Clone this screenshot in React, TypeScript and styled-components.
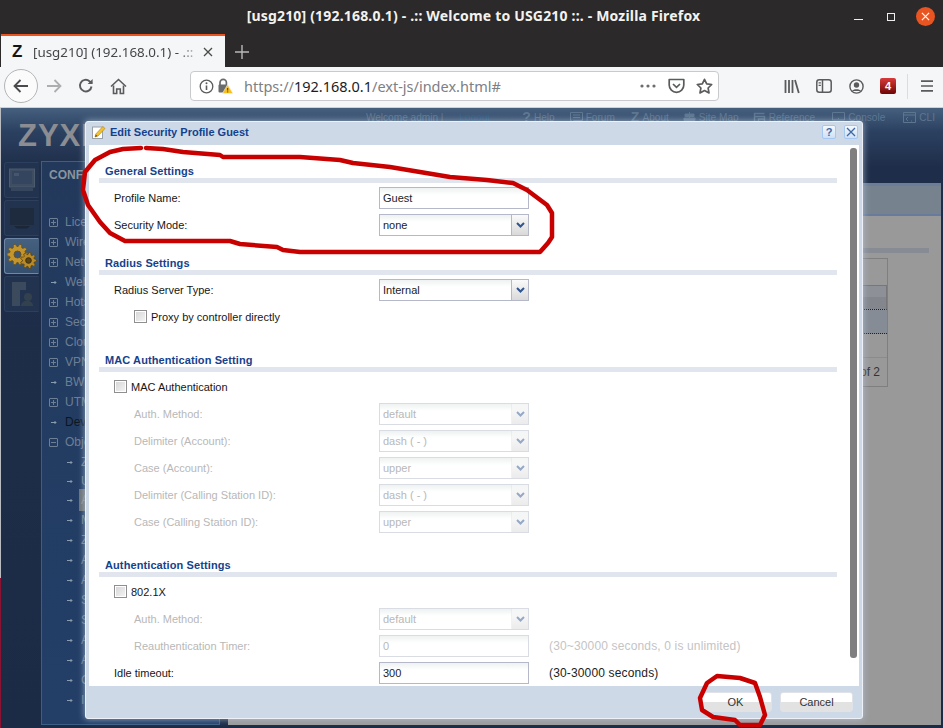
import React from "react";
import styled, { createGlobalStyle } from "styled-components";

const Global = createGlobalStyle`
  html, body { margin: 0; padding: 0; background: #1c2b45; }
  #root { width: 943px; height: 728px; overflow: hidden; }
  * { box-sizing: border-box; }
`;

const Screen = styled.div`
  position: relative;
  width: 943px;
  height: 728px;
  overflow: hidden;
  font-family: "Liberation Sans", Arial, sans-serif;
`;

/* ---------- window title ---------- */
const TitleBar = styled.div`
  position: relative;
  height: 34px;
  background: #2b292a;
  display: flex;
  align-items: center;
  justify-content: center;
  padding: 0 0 3px 4px;
  color: #f4f2ef;
  font: 700 14px "Noto Sans", sans-serif;
  letter-spacing: 0.18px;
`;
const WindowControls = styled.div`
  position: absolute;
  right: 8px;
  top: 7px;
  display: flex;
  align-items: center;
  gap: 16px;
`;
const MinBtn = styled.span`
  width: 9px;
  height: 1px;
  margin-top: 6px;
  margin-right: 8px;
  background: #eee;
`;
const MaxBtn = styled.span`
  width: 8px;
  height: 8px;
  margin-right: 5px;
  border: 1px solid #eee;
`;
const CloseBtn = styled.span`
  width: 19px;
  height: 19px;
  border-radius: 50%;
  background: #e95420;
  display: flex;
  align-items: center;
  justify-content: center;
`;

/* ---------- tabs ---------- */
const TabStrip = styled.div`
  height: 33px;
  background: #2b292a;
  display: flex;
  padding-left: 1px;
`;
const Tab = styled.div`
  width: 224px;
  height: 33px;
  background: #f5f6f7;
  border-top: 2px solid #e95420;
  display: flex;
  align-items: center;
  padding: 0 12px 0 11px;
  color: #44464a;
  font: 400 13.4px "Noto Sans", sans-serif;
  white-space: nowrap;
`;
const TabLogo = styled.span`
  width: 21px;
  font: 700 17px "Liberation Sans", sans-serif;
  color: #141414;
`;
const TabText = styled.span`
  flex: 1;
  overflow: hidden;
  -webkit-mask-image: linear-gradient(90deg, #000 85%, transparent);
  mask-image: linear-gradient(90deg, #000 85%, transparent);
`;
const NewTab = styled.div`
  width: 34px;
  display: flex;
  align-items: center;
  justify-content: center;
  padding-top: 2px;
`;

/* ---------- nav bar ---------- */
const NavBar = styled.div`
  height: 41px;
  background: #f5f6f7;
  border-bottom: 1px solid #cfd0d1;
  display: flex;
  align-items: center;
  padding: 0 0 2px 4px;
`;
const BackCircle = styled.div`
  width: 34px;
  height: 34px;
  border-radius: 50%;
  background: #fbfbfc;
  border: 1px solid #b4b5b6;
  display: flex;
  align-items: center;
  justify-content: center;
`;
const NavIcon = styled.div<{ $w?: number }>`
  width: ${(p) => p.$w ?? 32}px;
  height: 24px;
  display: flex;
  align-items: center;
  justify-content: center;
`;
const UrlBar = styled.div`
  width: 529px;
  height: 30px;
  margin: 0 60px 0 56px;
  background: #fff;
  border: 1px solid #c9cacb;
  border-radius: 4px;
  display: flex;
  align-items: center;
  padding: 0 0 0 8px;
`;
const UrlText = styled.div`
  flex: 1;
  margin-left: 8px;
  font: 400 14.5px "Noto Sans", sans-serif;
  color: #7d8084;
  white-space: nowrap;
`;
const UrlHost = styled.span`
  color: #1c1c1e;
`;
const Badge = styled.div`
  width: 16px;
  height: 16px;
  border-radius: 2px;
  background: linear-gradient(#d83a3a, #6d0505);
  color: #fff;
  font: 700 11px "Liberation Sans", sans-serif;
  display: flex;
  align-items: center;
  justify-content: center;
`;
const NavSep = styled.div`
  width: 1px;
  height: 25px;
  margin: 0 3px 0 0;
  background: #dcdddf;
`;

/* ---------- page behind dialog ---------- */
const Page = styled.div`
  height: 620px;
  display: flex;
  flex-direction: column;
  background: linear-gradient(#455f7e 0, #2b4060 24px, #1e2d49 60px, #1c2b45 100%);
`;
const TopBand = styled.div`
  height: 53px;
  display: flex;
  align-items: flex-start;
  padding: 3px 8px 0 18px;
`;
const Logo = styled.div`
  margin-top: 7px;
  color: #8b8d92;
  font: 700 31px "Liberation Sans", sans-serif;
  letter-spacing: 1px;
`;
const TopLinks = styled.div`
  margin-left: auto;
  display: flex;
  align-items: center;
  color: #5d7690;
  font-size: 10.1px;
  height: 12px;
`;
const TopLink = styled.span<{ $ml: number }>`
  display: flex;
  align-items: center;
  gap: 3px;
  margin-left: ${(p) => p.$ml}px;
  white-space: nowrap;
`;
const LogoutLink = styled.span`
  margin-left: 13px;
  color: #2f5f86;
`;
const LinkGlyph = styled.b`
  font-size: 14px;
  line-height: 12px;
`;
const Body = styled.div`
  flex: 1;
  display: flex;
  min-height: 0;
`;
const EdgeStrip = styled.div`
  width: 1px;
  margin-top: -53px;
  background: linear-gradient(#b9bcc0 0, #b9bcc0 470px, #8c1234 470px);
`;
const IconRail = styled.div`
  width: 40px;
  padding: 1px 0 0 3px;
  display: flex;
  flex-direction: column;
  gap: 2px;
`;
const RailTile = styled.div<{ $active?: boolean }>`
  width: 35px;
  height: 36px;
  border-radius: 3px 0 0 3px;
  border: 1px solid ${(p) => (p.$active ? "#6f88a8" : "#2c3f5c")};
  border-right-color: transparent;
  background: ${(p) => (p.$active ? "linear-gradient(#46617f,#35506f)" : "#223350")};
  display: flex;
  align-items: center;
  justify-content: center;
`;
const Panel = styled.div`
  width: 179px;
  margin-bottom: 3px;
  border: 1px solid #3e5f85;
  background: linear-gradient(#22395c, #233f68);
  padding: 6px 0 0 7px;
  color: #6d7f95;
  font-size: 12px;
`;
const PanelTitle = styled.div`
  height: 44px;
  font-weight: 700;
  color: #8a949f;
`;
const MenuRow = styled.div<{ $child?: boolean; $dark?: boolean; $h?: number }>`
  height: ${(p) => p.$h ?? 20}px;
  display: flex;
  align-items: center;
  gap: 7px;
  margin-left: ${(p) => (p.$child ? 16 : 0)}px;
  color: ${(p) => (p.$dark ? "#0d1522" : "#6d7f95")};
  white-space: nowrap;
`;
const PlusBox = styled.span`
  width: 9px;
  height: 9px;
  flex: none;
  border: 1px solid #6d7f95;
  border-radius: 1px;
  position: relative;
  &::before {
    content: "";
    position: absolute;
    left: 1px;
    right: 1px;
    top: 3px;
    height: 1px;
    background: #6d7f95;
  }
`;
const PlusV = styled(PlusBox)`
  &::after {
    content: "";
    position: absolute;
    top: 1px;
    bottom: 1px;
    left: 3px;
    width: 1px;
    background: #6d7f95;
  }
`;
const LeafMark = styled.span`
  width: 9px;
  flex: none;
  display: flex;
  justify-content: center;
`;
const MenuHighlight = styled.span`
  background: #6d7277;
  color: #8a8f95;
  padding: 4px 12px 4px 2px;
  margin-left: -2px;
`;
const Main = styled.div`
  width: 713px;
  margin: 22px 0 3px 8px;
  background: #999;
  display: flex;
  flex-direction: column;
`;
const MainTabs = styled.div`
  height: 33px;
  background: #76838f;
  border-top: 3px solid #6c7d99;
  border-bottom: 2px solid #6a7a9c;
`;
const MainRule = styled.div`
  height: 5px;
  margin: 32px 12px 0 0;
  background: #878b94;
`;
const Table = styled.div`
  width: 660px;
  height: 129px;
  margin-top: 5px;
  border: 1px solid #7f7f7f;
  display: flex;
  flex-direction: column;
`;
const HeadRow = styled.div`
  height: 26px;
`;
const SelectedRow = styled.div`
  height: 25px;
  background: linear-gradient(#8d9096 50%, #83868d 50%);
  border: 1px solid #777;
  border-bottom: 1px dotted #222;
`;
const StripedRow = styled.div`
  height: 24px;
  background: #868c96;
  border-bottom: 1px dotted #222;
`;
const EmptyRow = styled.div`
  height: 24px;
  border-bottom: 1px solid #8b8b8b;
`;
const Pager = styled.div`
  flex: 1;
  display: flex;
  align-items: center;
  justify-content: flex-end;
  padding-right: 7px;
  font-size: 12px;
  color: #333;
`;

/* ---------- dialog ---------- */
const Dialog = styled.div`
  position: absolute;
  left: 85px;
  top: 121px;
  width: 778px;
  height: 598px;
  background: #cdd9e6;
  border: 1px solid #eef2f8;
  border-radius: 3px;
  box-shadow: 0 0 7px rgba(190, 205, 225, 0.75);
  display: flex;
  flex-direction: column;
`;
const DialogHead = styled.div`
  height: 23px;
  display: flex;
  align-items: center;
  padding: 0 4px 3px 6px;
  gap: 4px;
`;
const DialogTitle = styled.div`
  flex: 1;
  color: #14418f;
  font-size: 11px;
  font-weight: 700;
`;
const Tool = styled.div`
  width: 14px;
  height: 14px;
  margin-left: 4px;
  border: 1px solid #a6c8f0;
  border-radius: 2px;
  background: linear-gradient(#f4f8fd, #cfe0f4);
  display: flex;
  align-items: center;
  justify-content: center;
  color: #3d68a5;
  font-size: 11px;
  font-weight: 700;
`;
const DialogBody = styled.div`
  position: relative;
  height: 541px;
  margin: 0 3px;
  background: #fff;
  overflow: hidden;
  padding-top: 19px;
  font-size: 11px;
  color: #161616;
`;
const ScrollThumb = styled.div`
  position: absolute;
  right: 2px;
  top: 3px;
  width: 7px;
  height: 510px;
  border-radius: 3px;
  background: #7f7f7f;
`;
const Section = styled.section<{ $gap: number }>`
  margin-bottom: ${(p) => p.$gap}px;
`;
const SectionTitle = styled.div`
  height: 14px;
  line-height: 14px;
  padding-left: 16px;
  color: #15428b;
  font-weight: 700;
  font-size: 11px;
  letter-spacing: 0.1px;
`;
const SectionRule = styled.div`
  width: 738px;
  height: 5px;
  margin: 0 0 1px 10px;
  background: #e0e5ee;
`;
const Row = styled.div<{ $indent?: number }>`
  height: 27px;
  display: flex;
  align-items: center;
  padding-left: ${(p) => 25 + (p.$indent ?? 0)}px;
`;
const Label = styled.div<{ $indent?: number; $off?: boolean }>`
  width: ${(p) => 265 - (p.$indent ?? 0)}px;
  color: ${(p) => (p.$off ? "#b8b8b8" : "#161616")};
`;
const Check = styled.span`
  width: 13px;
  height: 13px;
  margin-right: 4px;
  border: 1px solid #8f8f8f;
  box-shadow: inset 0 0 0 1px #fff;
  background: linear-gradient(135deg, #d4d4d4, #f6f6f6);
`;
const Field = styled.div<{ $off?: boolean }>`
  width: 150px;
  height: 22px;
  display: flex;
  align-items: center;
  padding-left: 3px;
  border: 1px solid ${(p) => (p.$off ? "#dadce4" : "#b5b8c8")};
  background: linear-gradient(#eef2f1, #fff 7px);
  color: ${(p) => (p.$off ? "#b8b8b8" : "#222")};
`;
const SelectField = styled(Field)`
  position: relative;
  padding-right: 17px;
`;
const SelectText = styled.span`
  flex: 1;
`;
const SelectArrow = styled.span<{ $off?: boolean }>`
  position: absolute;
  right: 0;
  top: 0;
  bottom: 0;
  width: 17px;
  border-left: 1px solid ${(p) => (p.$off ? "#e2e4ea" : "#b5b8c8")};
  background: linear-gradient(#fafafa, #d9d9d9);
  opacity: ${(p) => (p.$off ? 0.5 : 1)};
  display: flex;
  align-items: center;
  justify-content: center;
`;
const Hint = styled.span<{ $off?: boolean }>`
  margin-left: 20px;
  font-size: 12px;
  color: ${(p) => (p.$off ? "#c4c4c4" : "#222")};
  letter-spacing: 0.15px;
`;
const DialogFoot = styled.div`
  flex: 1;
  display: flex;
  justify-content: flex-end;
  align-items: flex-start;
  gap: 8px;
  padding: 6px 9px 0 0;
`;
const Button = styled.div`
  width: 73px;
  height: 20px;
  border: 1px solid #dfe3e9;
  border-radius: 3px;
  background: linear-gradient(#fff 50%, #e2e2e2 50%);
  color: #333;
  font-size: 11px;
  display: flex;
  align-items: center;
  justify-content: center;
`;
const Ink = styled.svg`
  position: absolute;
  left: 0;
  top: 0;
  pointer-events: none;
`;

/* ---------- icons ---------- */
const g = "#5a5b5c";
const Back = () => (
  <svg width="18" height="18" viewBox="0 0 18 18" fill="none" stroke="#4a4b4c" strokeWidth="1.8">
    <path d="M16 9H2.500M8.500 3 2.500 9l6 6" />
  </svg>
);
const Forward = () => (
  <svg width="18" height="18" viewBox="0 0 18 18" fill="none" stroke="#adaeb0" strokeWidth="1.8">
    <path d="M2 9h13.500M9.500 3l6 6-6 6" />
  </svg>
);
const Reload = () => (
  <svg width="16" height="16" viewBox="0 0 16 16" fill="none" stroke={g} strokeWidth="1.9">
    <path d="M13.500 8.500A5.800 5.800 0 1 1 11.500 3.200L14 5" />
    <path d="M14.600 1v5h-5" fill={g} stroke="none" />
  </svg>
);
const Home = () => (
  <svg width="17" height="17" viewBox="0 0 17 17" fill="none" stroke={g} strokeWidth="1.6">
    <path d="M1 8.500 8.500 1.500 16 8.500" />
    <path d="M3.500 7.500v8h3.200v-4.500h3.600v4.500h3.200v-8" />
  </svg>
);
const Info = () => (
  <svg width="15" height="15" viewBox="0 0 15 15" fill="none" stroke={g} strokeWidth="1.3">
    <circle cx="7.500" cy="7.500" r="6.300" />
    <path d="M7.500 6.500v4.500" strokeWidth="1.6" />
    <circle cx="7.500" cy="4.200" r="1" fill={g} stroke="none" />
  </svg>
);
const LockWarn = () => (
  <svg width="16" height="16" viewBox="0 0 16 16">
    <path d="M3 7V4.500a3.200 3.200 0 0 1 6.400 0V7" fill="none" stroke="#6a6b6c" strokeWidth="1.7" />
    <rect x="1.500" y="6.500" width="9" height="8" rx="1" fill="#6a6b6c" />
    <path d="M10.700 6.500 16 15.500H5.400z" fill="#f9c01b" stroke="#f5f6f7" strokeWidth=".6" />
    <path d="M10.700 10v2.600M10.700 13.400v1" stroke="#333" strokeWidth="1" />
  </svg>
);
const Dots = () => (
  <svg width="16" height="4" viewBox="0 0 16 4" fill="#6c6d6e">
    <circle cx="2" cy="2" r="1.600" />
    <circle cx="8" cy="2" r="1.600" />
    <circle cx="14" cy="2" r="1.600" />
  </svg>
);
const Pocket = () => (
  <svg width="17" height="16" viewBox="0 0 17 16" fill="none" stroke={g} strokeWidth="1.7">
    <path d="M1.200 1.500h14.600v5.500a7.300 7.300 0 0 1-14.600 0z" strokeLinejoin="round" />
    <path d="m5 6 3.500 3.300L12 6" />
  </svg>
);
const Star = () => (
  <svg width="17" height="16" viewBox="0 0 17 16" fill="none" stroke={g} strokeWidth="1.7">
    <path d="m8.500 1.300 2.200 4.500 5 .7-3.600 3.500.9 4.900-4.500-2.300L4 14.900l.9-4.900L1.300 6.500l5-.7z" strokeLinejoin="round" />
  </svg>
);
const Library = () => (
  <svg width="16" height="15" viewBox="0 0 16 15" stroke={g} strokeWidth="1.8" fill="none">
    <path d="M1.500 1v13M5 1v13M8.500 1v13M11 1l3.800 13" />
  </svg>
);
const SidebarIcon = () => (
  <svg width="16" height="14" viewBox="0 0 16 14" fill="none" stroke={g} strokeWidth="1.5">
    <rect x=".8" y=".8" width="14.400" height="12.400" rx="2.500" />
    <path d="M6.500 1v12" />
    <path d="M2.600 3.800h2.300M2.600 6.300h2.300" strokeWidth="1.200" />
  </svg>
);
const Account = () => (
  <svg width="15" height="15" viewBox="0 0 15 15" fill="none" stroke={g} strokeWidth="1.400">
    <circle cx="7.500" cy="7.500" r="6.600" />
    <circle cx="7.500" cy="6" r="2.700" fill={g} stroke="none" />
    <path d="M3 12c1-2.500 8-2.500 9 0" fill={g} stroke="none" />
  </svg>
);
const MenuIcon = () => (
  <svg width="14" height="12" viewBox="0 0 14 12" stroke={g} strokeWidth="1.700">
    <path d="M1 1.200h12M1 6h12M1 10.800h12" />
  </svg>
);
const Chevron = () => (
  <svg width="9" height="6" viewBox="0 0 9 6" fill="none" stroke="#2e5590" strokeWidth="2">
    <path d="m1 1 3.500 3.500L8 1" />
  </svg>
);
const LeafArrow = () => (
  <svg width="6" height="5" viewBox="0 0 6 5" fill="none" stroke="#8a9bb0" strokeWidth="1">
    <path d="M0 2.500h5M3.500 1 5 2.500 3.500 4" />
  </svg>
);
const PencilNote = () => (
  <svg width="14" height="14" viewBox="0 0 14 14">
    <rect x=".5" y="2" width="10" height="11.500" fill="#fff" stroke="#9aa0a8" />
    <path d="M3 12 3.800 9 10.800 1.500 13 3.500 6 11z" fill="#f2c230" stroke="#b07a10" strokeWidth=".6" />
    <path d="M3 12 3.800 9.500 5.500 11z" fill="#7a4a20" />
  </svg>
);
const XMark = ({ c = "#3d68a5", s = 10 }: { c?: string; s?: number }) => (
  <svg width={s} height={s} viewBox="0 0 10 10" stroke={c} strokeWidth="1.300">
    <path d="m1 1 8 8M9 1 1 9" />
  </svg>
);
const gearPath = (cx: number, cy: number, r1: number, r2: number, n: number) => {
  const pts: string[] = [];
  for (let i = 0; i < n; i++) {
    const a = (i / n) * Math.PI * 2;
    const w = (Math.PI / n) * 0.5;
    [
      [r2, a - w * 1.5],
      [r1, a - w * 0.7],
      [r1, a + w * 0.7],
      [r2, a + w * 1.5],
    ].forEach(([r, t]) => pts.push(`${(cx + r * Math.cos(t)).toFixed(1)} ${(cy + r * Math.sin(t)).toFixed(1)}`));
  }
  return `M${pts.join("L")}Z`;
};
const Gears = () => (
  <svg width="30" height="25" viewBox="0 0 30 25">
    <path d={gearPath(10.5, 10.5, 10.5, 8, 10)} fill="#c4952c" stroke="#6e5216" strokeWidth=".8" />
    <circle cx="10.500" cy="10.500" r="3.500" fill="#3f5570" stroke="#6e5216" />
    <path d={gearPath(21.5, 16.5, 8, 6, 9)} fill="#b98b28" stroke="#5e4512" strokeWidth=".8" />
    <circle cx="21.500" cy="16.500" r="2.800" fill="#5b4415" stroke="#3f2f0e" />
  </svg>
);
const RailMonitor = () => (
  <svg width="26" height="24" viewBox="0 0 26 24">
    <rect x=".5" y="1" width="25" height="18" fill="#3e4d62" stroke="#4d5b6e" />
    <rect x="3" y="3" width="20" height="13" fill="#33455f" />
    <path d="M5 5h5v3H5z" fill="#45566d" />
    <rect x="2" y="20" width="22" height="3" fill="#36465c" />
  </svg>
);
const RailDarkMonitor = () => (
  <svg width="26" height="24" viewBox="0 0 26 24">
    <rect x="1" y="2" width="24" height="17" fill="#1e2b3f" />
    <path d="M5 20h16l-3 2.500H8z" fill="#1b2636" />
  </svg>
);
const RailReport = () => (
  <svg width="26" height="28" viewBox="0 0 26 28">
    <path d="M3 2h14v8h-6v16H3z" fill="#3c4a5d" />
    <circle cx="19" cy="17" r="4" fill="#33414f" />
    <path d="M12 26c0-7 12-7 12 0z" fill="#33414f" />
  </svg>
);
const SmallGlyph = ({ kind }: { kind: string }) => (
  <svg width="13" height="11" viewBox="0 0 13 11" fill="none" stroke="#5d7690" strokeWidth="1">
    {kind === "forum" && <path d="M.5.500h12v8h-9l-2 2v-2h-1zM3 3h7M3 5.500h7" />}
    {kind === "map" && <path d="M6.500 0v11M2 2h9v2.500H2zM1 6h11v2.500H1z" fill="#5d7690" />}
    {kind === "ref" && <path d="M1.500 10V1.500h10M1.500 4.500h10V10h-6V7h6" strokeWidth="1.400" />}
    {kind === "console" && <path d="M.5.500h12v7.500h-12zM1 9.500h11M6 6.500h1" fill="none" />}
    {kind === "cli" && <path d="M.5.500h12v10h-12zM.5 3h12M5 5 3 7l2 2M8 9h1" />}
  </svg>
);

const Loop = "M146 148 L163 149 L183 152 L220 155 L223 157 L300 157 L340 160 L353 163 L390 167 L420 172 L450 177 L487 180 L513 183 L527 190 L547 205 L552 213 L552 237 L548 243 L540 252 L340 252 L300 252 L283 250 L277 247 L240 244 L230 241 L125 241 L110 233 L100 222 L88 205 L83 190 L85 172 L95 160 L110 152 L123 149 L141 148";
const OkLoop = "M717 676 L707 683 L700 698 L702 710 L713 717 L735 720 L740 725 L760 725 L765 715 L760 697 L755 683 L740 678 Z";

const topMenu: [string, boolean][] = [
  ["License", true], ["Wireless", true], ["Network", true], ["Web Authentication", false],
  ["Hotspot", true], ["Security Service", true], ["Cloud CNM", true], ["VPN", true],
  ["BWM", false], ["UTM Profile", true],
];
const children = ["Zone", "User/Group", "AP Profile", "MON Profile", "ZyMesh Profile", "Application", "Address", "Service", "Schedule", "AAA Server", "Auth. Method", "Certificate", "ISP Account"];

const Sel = ({ v, off }: { v: string; off?: boolean }) => (
  <SelectField $off={off}>
    <SelectText>{v}</SelectText>
    <SelectArrow $off={off}><Chevron /></SelectArrow>
  </SelectField>
);

export default function App() {
  return (
    <Screen>
      <Global />
      <TitleBar>
        [usg210] (192.168.0.1) - .:: Welcome to USG210 ::. - Mozilla Firefox
        <WindowControls>
          <MinBtn />
          <MaxBtn />
          <CloseBtn><XMark c="#fff" s={9} /></CloseBtn>
        </WindowControls>
      </TitleBar>
      <TabStrip>
        <Tab>
          <TabLogo>Z</TabLogo>
          <TabText>[usg210] (192.168.0.1) - .::</TabText>
          <XMark c="#4a4a4a" s={10} />
        </Tab>
        <NewTab>
          <svg width="14" height="14" viewBox="0 0 14 14" stroke="#b8b8b8" strokeWidth="1.400"><path d="M7 0v14M0 7h14" /></svg>
        </NewTab>
      </TabStrip>
      <NavBar>
        <BackCircle><Back /></BackCircle>
        <NavIcon $w={32}><Forward /></NavIcon>
        <NavIcon $w={32}><Reload /></NavIcon>
        <NavIcon $w={32}><Home /></NavIcon>
        <UrlBar>
          <Info />
          <NavIcon $w={22}><LockWarn /></NavIcon>
          <UrlText>https://<UrlHost>192.168.0.1</UrlHost>/ext-js/index.html#</UrlText>
          <Dots />
          <NavIcon $w={40}><Pocket /></NavIcon>
          <NavIcon $w={17}><Star /></NavIcon>
          <NavIcon $w={5} />
        </UrlBar>
        <NavIcon $w={26}><Library /></NavIcon>
        <NavIcon $w={38}><SidebarIcon /></NavIcon>
        <NavIcon $w={26}><Account /></NavIcon>
        <NavIcon $w={38}><Badge>4</Badge></NavIcon>
        <NavSep />
        <NavIcon $w={32}><MenuIcon /></NavIcon>
      </NavBar>
      <Page>
        <TopBand>
          <Logo>ZYXEL</Logo>
          <TopLinks>
            <TopLink $ml={0}>Welcome admin |<LogoutLink>Logout</LogoutLink></TopLink>
            <TopLink $ml={32}><LinkGlyph>?</LinkGlyph> Help</TopLink>
            <TopLink $ml={15}><SmallGlyph kind="forum" /> Forum</TopLink>
            <TopLink $ml={16}><LinkGlyph>Z</LinkGlyph> About</TopLink>
            <TopLink $ml={14}><SmallGlyph kind="map" /> Site Map</TopLink>
            <TopLink $ml={14}><SmallGlyph kind="ref" /> Reference</TopLink>
            <TopLink $ml={17}><SmallGlyph kind="console" /> Console</TopLink>
            <TopLink $ml={18}><SmallGlyph kind="cli" /> CLI</TopLink>
          </TopLinks>
        </TopBand>
        <Body>
          <EdgeStrip />
          <IconRail>
            <RailTile><RailMonitor /></RailTile>
            <RailTile><RailDarkMonitor /></RailTile>
            <RailTile $active><Gears /></RailTile>
            <RailTile><RailReport /></RailTile>
          </IconRail>
          <Panel>
            <PanelTitle>CONFIGURATION</PanelTitle>
            {topMenu.map(([t, plus]) => (
              <MenuRow key={t}>
                {plus ? <PlusV /> : <LeafMark><LeafArrow /></LeafMark>}
                {t}
              </MenuRow>
            ))}
            <MenuRow $dark><LeafMark><LeafArrow /></LeafMark>Device HA</MenuRow>
            <MenuRow><PlusBox />Object</MenuRow>
            {children.map((t, i) => (
              <MenuRow key={t} $child $h={i === 1 ? 18 : 20}>
                <LeafMark><LeafArrow /></LeafMark>
                {i === 2 ? <MenuHighlight>{t}</MenuHighlight> : t}
              </MenuRow>
            ))}
          </Panel>
          <Main>
            <MainTabs />
            <MainRule />
            <Table>
              <HeadRow />
              <SelectedRow />
              <StripedRow />
              <EmptyRow />
              <Pager>of 2</Pager>
            </Table>
          </Main>
        </Body>
      </Page>

      <Dialog>
        <DialogHead>
          <PencilNote />
          <DialogTitle>Edit Security Profile Guest</DialogTitle>
          <Tool>?</Tool>
          <Tool><XMark s={10} /></Tool>
        </DialogHead>
        <DialogBody>
          <Section $gap={18}>
            <SectionTitle>General Settings</SectionTitle>
            <SectionRule />
            <Row><Label>Profile Name:</Label><Field>Guest</Field></Row>
            <Row><Label>Security Mode:</Label><Sel v="none" /></Row>
          </Section>
          <Section $gap={23}>
            <SectionTitle>Radius Settings</SectionTitle>
            <SectionRule />
            <Row><Label>Radius Server Type:</Label><Sel v="Internal" /></Row>
            <Row $indent={20}><Check />Proxy by controller directly</Row>
          </Section>
          <Section $gap={23}>
            <SectionTitle>MAC Authentication Setting</SectionTitle>
            <SectionRule />
            <Row><Check />MAC Authentication</Row>
            <Row $indent={20}><Label $indent={20} $off>Auth. Method:</Label><Sel v="default" off /></Row>
            <Row $indent={20}><Label $indent={20} $off>Delimiter (Account):</Label><Sel v="dash ( - )" off /></Row>
            <Row $indent={20}><Label $indent={20} $off>Case (Account):</Label><Sel v="upper" off /></Row>
            <Row $indent={20}><Label $indent={20} $off>Delimiter (Calling Station ID):</Label><Sel v="dash ( - )" off /></Row>
            <Row $indent={20}><Label $indent={20} $off>Case (Calling Station ID):</Label><Sel v="upper" off /></Row>
          </Section>
          <Section $gap={0}>
            <SectionTitle>Authentication Settings</SectionTitle>
            <SectionRule />
            <Row><Check />802.1X</Row>
            <Row $indent={20}><Label $indent={20} $off>Auth. Method:</Label><Sel v="default" off /></Row>
            <Row $indent={20}>
              <Label $indent={20} $off>Reauthentication Timer:</Label>
              <Field $off>0</Field>
              <Hint $off>(30~30000 seconds, 0 is unlimited)</Hint>
            </Row>
            <Row>
              <Label>Idle timeout:</Label>
              <Field>300</Field>
              <Hint>(30-30000 seconds)</Hint>
            </Row>
          </Section>
          <ScrollThumb />
        </DialogBody>
        <DialogFoot>
          <Button>OK</Button>
          <Button>Cancel</Button>
        </DialogFoot>
      </Dialog>

      <Ink width="943" height="728" viewBox="0 0 943 728" fill="none" stroke="#c80000" strokeWidth="4.5" strokeLinejoin="round" strokeLinecap="round">
        <path d={Loop} />
        <path d={OkLoop} />
      </Ink>
    </Screen>
  );
}
